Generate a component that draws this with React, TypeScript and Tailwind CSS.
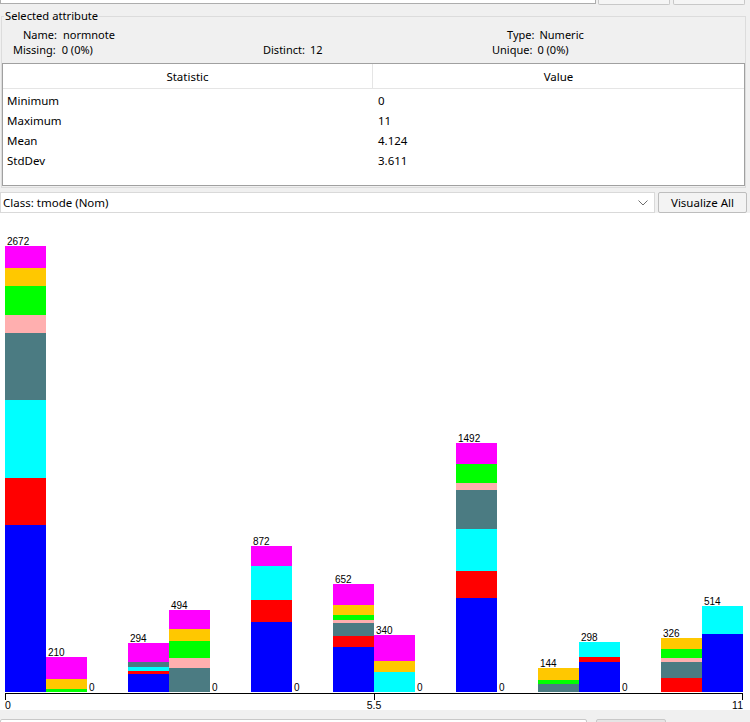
import React from 'react';

const COLORS: Record<string, string> = {
  B: '#0000ff',
  R: '#ff0000',
  C: '#00ffff',
  T: '#4b7b82',
  P: '#ffafaf',
  G: '#00ff00',
  O: '#ffc800',
  M: '#ff00ff',
};

// segments listed bottom -> top, heights in px
const BINS: { count: number; segs: [string, number][] }[] = [
  { count: 2672, segs: [['B', 167], ['R', 47], ['C', 78], ['T', 67], ['P', 18], ['G', 29], ['O', 18], ['M', 22]] },
  { count: 210, segs: [['G', 3], ['O', 10], ['M', 22]] },
  { count: 0, segs: [] },
  { count: 294, segs: [['B', 18], ['R', 3], ['C', 4], ['T', 5], ['M', 19]] },
  { count: 494, segs: [['T', 24], ['P', 10], ['G', 17], ['O', 12], ['M', 19]] },
  { count: 0, segs: [] },
  { count: 872, segs: [['B', 70], ['R', 22], ['C', 34], ['M', 20]] },
  { count: 0, segs: [] },
  { count: 652, segs: [['B', 45], ['R', 11], ['T', 13], ['P', 3], ['G', 5], ['O', 10], ['M', 21]] },
  { count: 340, segs: [['C', 20], ['O', 11], ['M', 26]] },
  { count: 0, segs: [] },
  { count: 1492, segs: [['B', 94], ['R', 27], ['C', 42], ['T', 39], ['P', 7], ['G', 19], ['M', 21]] },
  { count: 0, segs: [] },
  { count: 144, segs: [['T', 8], ['G', 4], ['O', 12]] },
  { count: 298, segs: [['B', 30], ['R', 5], ['C', 15]] },
  { count: 0, segs: [] },
  { count: 326, segs: [['R', 14], ['T', 16], ['P', 4], ['G', 9], ['O', 11]] },
  { count: 514, segs: [['B', 58], ['C', 28]] },
];

const stats = [
  ['Minimum', '0'],
  ['Maximum', '11'],
  ['Mean', '4.124'],
  ['StdDev', '3.611'],
];

const Histogram: React.FC = () => {
  const base = 479;
  return (
    <svg width={750} height={497} className="block">
      {BINS.map((b, i) => {
        const x = 5 + i * 41;
        let y = base;
        const total = b.segs.reduce((s, [, h]) => s + h, 0);
        return (
          <g key={i}>
            {b.segs.map(([c, h], j) => {
              y -= h;
              return <rect key={j} x={x} y={y} width={41} height={h} fill={COLORS[c]} shapeRendering="crispEdges" />;
            })}
            <text x={x + 2} y={base - total - 1.5} fontSize={10} fontFamily="'Liberation Sans', Arial, sans-serif" fill="#000">
              {b.count}
            </text>
          </g>
        );
      })}
      <line x1={5} y1={480.5} x2={743} y2={480.5} stroke="#000" shapeRendering="crispEdges" />
      <line x1={5.5} y1={480} x2={5.5} y2={487} stroke="#000" shapeRendering="crispEdges" />
      <line x1={374.5} y1={480} x2={374.5} y2={487} stroke="#000" shapeRendering="crispEdges" />
      <line x1={742.5} y1={480} x2={742.5} y2={487} stroke="#000" shapeRendering="crispEdges" />
      <g fontSize={10.5} fontFamily="'Liberation Sans', Arial, sans-serif" fill="#000">
        <text x={5} y={496}>0</text>
        <text x={374} y={496} textAnchor="middle">5.5</text>
        <text x={743} y={496} textAnchor="end">11</text>
      </g>
    </svg>
  );
};

export default function App() {
  return (
    <div className="w-[750px] h-[722px] overflow-hidden bg-[#f0f0f0] text-[11.5px] text-black font-['Noto_Sans',sans-serif] leading-[15px]">
      {/* edges of the controls above */}
      <div className="flex h-[5px]">
        <div className="w-[596px] h-[4px] bg-white border border-t-0 border-[#adadad]" />
        <div className="ml-[2px] w-[72px] h-[5px] bg-[#f5f5f5] border border-t-0 border-[#c8c8c8] rounded-b-[2px]" />
        <div className="ml-[3px] w-[72px] h-[5px] bg-[#f5f5f5] border border-t-0 border-[#c8c8c8] rounded-b-[2px]" />
      </div>

      {/* Selected attribute */}
      <fieldset className="mt-[3px] ml-[1px] w-[745px] border border-[#dcdcdc] pb-[1px]">
        <legend className="ml-[2px] px-[1px] h-[16px] leading-[16px] text-[11.2px]">Selected attribute</legend>
        <div className="pt-[3px] text-[11px] leading-[15px]">
          <div className="flex h-[15px] items-center">
            <div className="w-[505px] pl-[21px] flex gap-[6px]">
              <span>Name:</span>
              <span>normnote</span>
            </div>
            <div className="flex gap-[5px]">
              <span>Type:</span>
              <span>Numeric</span>
            </div>
          </div>
          <div className="flex h-[15px] items-center">
            <div className="w-[261px] pl-[11px] flex gap-[6px]">
              <span>Missing:</span>
              <span>0 (0%)</span>
            </div>
            <div className="w-[229px] flex gap-[5px]">
              <span>Distinct:</span>
              <span>12</span>
            </div>
            <div className="flex gap-[5px]">
              <span>Unique:</span>
              <span>0 (0%)</span>
            </div>
          </div>
        </div>

        <div className="mt-[6px] h-[123px] bg-white border border-[#a0a0a0]">
          <div className="flex h-[25px] border-b border-[#e5e5e5]">
            <div className="w-[370px] border-r border-[#e5e5e5] flex items-center justify-center pt-[1px]">Statistic</div>
            <div className="flex-1 flex items-center justify-center pt-[1px]">Value</div>
          </div>
          <div className="pt-[1px]">
            {stats.map(([k, v]) => (
              <div key={k} className="flex h-[20px] items-center">
                <div className="w-[371px] pl-[4px]">{k}</div>
                <div className="pl-[4px]">{v}</div>
              </div>
            ))}
          </div>
        </div>
      </fieldset>

      {/* class selector */}
      <div className="mt-[4px] flex h-[21px] gap-[3px]">
        <div className="w-[655px] h-[21px] bg-white border border-[#d9d9d9] flex items-center justify-between pl-[2px] pr-[5px]">
          <span>Class: tmode (Nom)</span>
          <svg width="10" height="6" viewBox="0 0 10 6" className="mr-[1px]">
            <polyline points="0.5,0.5 5,5 9.5,0.5" fill="none" stroke="#6d6d6d" strokeWidth="1" />
          </svg>
        </div>
        <div className="w-[89px] h-[21px] bg-[#f3f3f3] border border-[#bdbdbd] rounded-[2px] flex items-center justify-center">
          Visualize All
        </div>
      </div>

      {/* histogram */}
      <div className="bg-white h-[497px]">
        <Histogram />
      </div>

      {/* controls below */}
      <div className="mt-[9px] flex gap-[9px]">
        <div className="w-[587px] h-[20px] bg-white border border-[#c8c8c8] rounded-[2px]" />
        <div className="w-[70px] h-[20px] bg-[#e5e5e5] border border-[#c8c8c8] rounded-[2px]" />
      </div>
    </div>
  );
}
